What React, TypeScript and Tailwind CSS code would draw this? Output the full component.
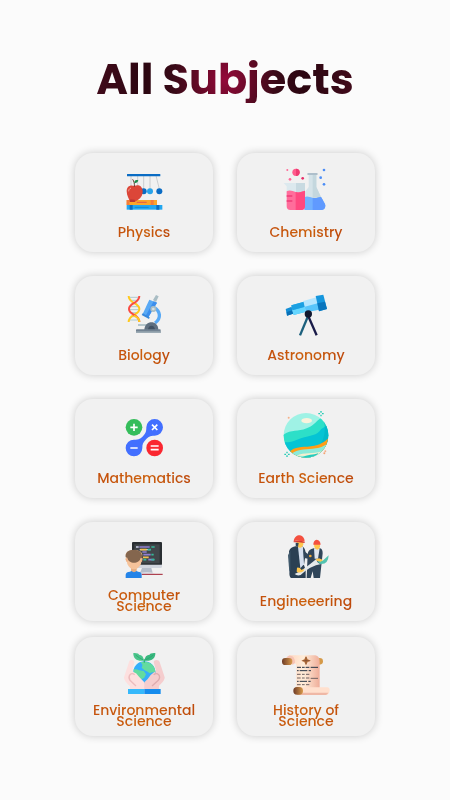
import type { ReactNode } from "react";

interface Subject {
  name: string;
  href: string;
  icon: ReactNode;
}

function Icon({ children }: { children: ReactNode }) {
  return (
    <svg viewBox="163 60 144 144" className="size-12" aria-hidden="true">
      {children}
    </svg>
  );
}

function PhysicsIcon() {
  return (
    <Icon>
      <path
        d="M196 92V122M216 92V128M234 92V132M253 92V132M271 92L281 132"
        stroke="#b8bcc0"
        strokeWidth="2"
        fill="none"
      />
      <rect x="184" y="87" width="100" height="7" rx="1" fill="#0a6cc4" />
      <circle cx="234" cy="139" r="9" fill="#0a6cc4" />
      <circle cx="253" cy="139" r="9" fill="#28a3ea" />
      <circle cx="281" cy="139" r="9" fill="#0a6cc4" />
      <rect x="183" y="165" width="91" height="15" fill="#fba629" />
      <path d="M183 165h8v15h-8zM255 165h9v15h-9z" fill="#f47b3c" />
      <path d="M213 172h30" stroke="#e2574c" strokeWidth="3" />
      <rect x="183" y="180" width="107" height="14" fill="#22a7f0" />
      <path d="M192 180h9v14h-9zM272 180h9v14h-9z" fill="#0a6cc4" />
      <path d="M207 187h42" stroke="#1287d4" strokeWidth="3" />
      <path
        d="M206 123C194 118 183 124 183 139C183 153 191 163 193 170H208C217 166 232 157 231 138C230 122 217 118 206 123Z"
        fill="#dc4638"
      />
      <path d="M194 163L192 171H208L207 164Z" fill="#b93532" />
      <path d="M189 139C189 134 191 131 196 129" stroke="#f4a69b" strokeWidth="3" fill="none" />
      <path d="M206 125C207 116 205 109 201 103" stroke="#65352c" strokeWidth="3" fill="none" />
      <path d="M206 114C206 106 210 103 218 106C216 113 212 115 206 114Z" fill="#198b48" />
    </Icon>
  );
}

function ChemistryIcon() {
  return (
    <Icon>
      <circle cx="205" cy="82" r="11" fill="#ff5b8c" />
      <path d="M205 71A11 11 0 0 1 205 93Z" fill="#ef3b72" />
      <circle cx="179" cy="75" r="3" fill="#ff6b99" />
      <circle cx="187" cy="103" r="4" fill="#ff6b99" />
      <circle cx="225" cy="100" r="4" fill="#e82e69" />
      <circle cx="289" cy="75" r="4" fill="#4b8df6" />
      <circle cx="279" cy="98" r="4" fill="#4b8df6" />
      <circle cx="289" cy="118" r="4" fill="#4b8df6" />
      <path d="M243 89H266V126L281 158H230V143L243 126Z" fill="#d5e3e9" />
      <path d="M255 89H266V126L281 158H255Z" fill="#c4d7de" />
      <rect x="239" y="84" width="31" height="6" rx="2" fill="#aebfcb" />
      <path
        d="M230 157C239 152 246 157 254 158C263 162 272 157 280 156C289 172 293 177 293 182C293 190 288 195 280 195H230Z"
        fill="#72b1ff"
      />
      <path
        d="M255 158C263 161 272 157 280 156C289 172 293 177 293 182C293 190 288 195 280 195H255Z"
        fill="#609aff"
      />
      <path d="M168 114H232V145H177V124Z" fill="#dce9ee" />
      <path d="M205 114H232V145H205Z" fill="#c8dae1" />
      <path
        d="M177 139C186 134 195 138 204 141C215 145 224 138 232 137V184Q232 195 221 195H188Q177 195 177 184Z"
        fill="#ff6d9b"
      />
      <path d="M204 141C215 145 224 138 232 137V184Q232 195 221 195H204Z" fill="#ff4880" />
      <path d="M177 153H194M177 168H194" stroke="#f03b78" strokeWidth="5" />
    </Icon>
  );
}

function BiologyIcon() {
  return (
    <Icon>
      <path
        d="M193 88H218M194 97H216M198 107H213M193 116H217M192 125H219M196 134H215M198 146H213M192 156H218"
        stroke="#afcbd1"
        strokeWidth="3"
      />
      <path
        d="M189 84C189 108 221 103 221 123C221 142 189 138 189 162"
        stroke="#ffc91f"
        strokeWidth="6"
        fill="none"
      />
      <path
        d="M221 84C221 108 190 103 190 123C190 142 221 138 221 162"
        stroke="#f94c43"
        strokeWidth="6"
        fill="none"
      />
      <path d="M205 143C217 148 221 154 221 162" stroke="#ffc91f" strokeWidth="6" fill="none" />
      <path d="M265 118C284 129 288 151 268 165" stroke="#58a9f5" strokeWidth="10" fill="none" />
      <path d="M262 96L271 81L279 85L271 102Z" fill="#a9bdc4" />
      <path d="M251 95L274 104L248 148L231 138Z" fill="#58a9f5" />
      <path d="M264 100L274 104L248 148L240 143Z" fill="#3b8eed" />
      <path d="M231 136L252 148L250 153L228 141Z" fill="#3688dc" />
      <circle cx="263" cy="123" r="9" fill="#a9bdc4" />
      <circle cx="263" cy="123" r="4" fill="#d5e1e5" />
      <path d="M217 171H244" stroke="#a9bdc4" strokeWidth="5" />
      <path d="M236 186C236 156 278 154 278 186Z" fill="#5f6f80" />
      <path d="M247 186C247 169 268 169 268 186Z" fill="#415163" />
      <rect x="211" y="184" width="74" height="11" rx="2" fill="#718292" />
      <rect x="211" y="190" width="74" height="5" fill="#9baab4" />
    </Icon>
  );
}

function AstronomyIcon() {
  return (
    <Icon>
      <path d="M240 147L217 202" stroke="#1c607d" strokeWidth="7" />
      <path d="M243 147L267 202" stroke="#191b48" strokeWidth="7" />
      <path d="M174 123L192 116L196 137L178 143Z" fill="#148fd6" />
      <path d="M177 132L194 127L196 137L178 143Z" fill="#0870b7" />
      <path d="M191 112L229 101L235 131L198 141Z" fill="#36b9f1" />
      <path d="M194 127L232 116L235 131L198 141Z" fill="#65d6ff" />
      <path d="M191 112L229 101L232 116L194 127Z" fill="#1ba0e2" />
      <path d="M227 99L266 88L274 125L235 133Z" fill="#b4e6ff" />
      <path d="M231 116L270 106L274 125L235 133Z" fill="#58c5fb" />
      <path d="M264 84L287 80L298 123L274 130Z" fill="#1596dd" />
      <path d="M269 106L292 101L298 123L274 130Z" fill="#0975bd" />
      <circle cx="242" cy="138" r="11" fill="#11182f" />
    </Icon>
  );
}

function MathematicsIcon() {
  return (
    <Icon>
      <path
        d="M242 109A25 25 0 1 1 267 134C252 134 248 138 240 146C232 154 230 160 230 171A25 25 0 1 1 205 146C220 146 226 142 233 134C240 127 242 122 242 109Z"
        fill="#426fff"
      />
      <circle cx="205" cy="109" r="25" fill="#35bd5b" />
      <circle cx="267" cy="171" r="25" fill="#fa2730" />
      <path
        d="M194 109H216M205 98V120M194 171H216M259 101L275 117M275 101L259 117M255 165H279M255 176H279"
        stroke="#fff"
        strokeWidth="5"
      />
    </Icon>
  );
}

function EarthScienceIcon() {
  return (
    <Icon>
      <defs>
        <clipPath id="planet">
          <circle cx="235" cy="133" r="67" />
        </clipPath>
      </defs>
      <g clipPath="url(#planet)">
        <rect x="165" y="64" width="140" height="140" fill="#9ff2e5" />
        <path
          d="M165 133C193 113 209 124 237 112C258 105 263 93 278 82L305 88V204H165Z"
          fill="#2ddfc8"
        />
        <path d="M165 151C188 159 202 148 220 142C249 132 267 135 281 114L305 99V204H165Z" fill="#05c4d4" />
        <path d="M274 67C300 94 296 137 271 174L311 168V76Z" fill="#00aebd" opacity=".5" />
        <path d="M184 184C203 165 220 170 250 166C280 162 290 151 305 140V204H184Z" fill="#ff9d17" />
        <path d="M188 191C216 169 239 178 264 172C284 169 290 162 305 156V204H188Z" fill="#8bead9" />
        <path d="M207 194C230 183 255 190 283 181L264 196Z" fill="#f5efcf" />
        <path d="M220 201C240 189 257 193 272 186L260 203Z" fill="#24cbbf" />
      </g>
      <ellipse cx="237" cy="89" rx="16" ry="8" fill="#faf2dc" />
      <path
        d="M280 60V65M280 71V76M272 68H277M283 68H288M178 182V187M178 193V198M170 190H175M181 190H186"
        stroke="#24cbb5"
        strokeWidth="4"
      />
      <circle cx="183" cy="80" r="3" fill="#f4b18a" />
      <circle cx="293" cy="181" r="3" fill="#f4b18a" />
      <circle cx="290" cy="187" r="3" fill="#f4a375" />
    </Icon>
  );
}

function ComputerScienceIcon() {
  return (
    <Icon>
      <rect x="199" y="84" width="90" height="70" rx="3" fill="#292e32" />
      <rect x="206" y="91" width="76" height="57" fill="#41464a" />
      <path d="M199 152H289V158Q289 162 284 162H199Z" fill="#d1d5de" />
      <path d="M229 162H257L261 176H223Z" fill="#b6bdca" />
      <path d="M218 180Q244 170 269 180Z" fill="#dfe3e9" />
      <path d="M228 181H291" stroke="#a01f30" strokeWidth="3" />
      <path d="M211 99H219M254 107H222" stroke="#ccd0ea" strokeWidth="4" />
      <path d="M221 99H252M230 114H243M233 122H255M248 137H265" stroke="#9080d2" strokeWidth="5" />
      <path d="M224 107H243M232 130H249" stroke="#f3bf50" strokeWidth="5" />
      <path d="M257 99H267M246 107H256M257 122H264M233 137H242M257 137H267" stroke="#35b799" strokeWidth="5" />
      <path d="M196 155H213V178H196Z" fill="#e6ae82" />
      <path d="M180 192V182Q181 173 193 173L197 171Q205 178 213 171L217 173Q228 173 228 182V192Z" fill="#2584e8" />
      <path d="M180 122C181 103 229 103 230 122L226 150Q218 166 205 166Q192 166 185 150Z" fill="#f6c39a" />
      <path
        d="M180 130C178 116 187 107 205 107C224 107 232 118 229 136L225 131C222 151 188 151 185 131Z"
        fill="#84664e"
      />
      <path d="M181 133L185 143M229 133L226 143" stroke="#f1b387" strokeWidth="5" />
    </Icon>
  );
}

function EngineeringIcon() {
  return (
    <Icon>
      <path d="M240 119Q243 106 258 103H277Q285 105 285 118L277 192H258L255 172L249 192H237Z" fill="#30465a" />
      <path d="M259 103H276L271 134H261Z" fill="#dfe6ed" />
      <path d="M259 89H277V99Q269 115 260 99Z" fill="#ffc64d" />
      <path d="M257 92Q257 79 267 77Q278 78 279 92Z" fill="#f4503f" />
      <path
        d="M184 112Q187 100 203 97H223Q233 101 234 119L229 153L234 168V192H190Q183 188 186 169Z"
        fill="#2b4053"
      />
      <path d="M181 124L188 110V167L185 175Z" fill="#40596c" />
      <path d="M211 99L226 98L229 151L218 163Z" fill="#d5dfee" />
      <path d="M206 80H227V91Q223 106 210 99Z" fill="#ffc64d" />
      <path d="M204 86V95L211 99L213 87Z" fill="#30465a" />
      <path d="M198 82C200 68 209 63 217 64C226 66 231 73 231 83C218 80 208 80 198 82Z" fill="#f4503f" />
      <path d="M198 82C209 79 221 79 231 84V87C217 84 207 84 198 85Z" fill="#d63c35" />
      <path d="M227 109L241 121L255 127L251 136L229 132Z" fill="#30465a" />
      <path d="M201 180Q224 170 267 134Q267 148 281 150Q248 155 219 183Q209 187 201 180Z" fill="#e4e9eb" />
      <path d="M267 134L285 140L303 124Q302 150 281 150Q272 150 267 134Z" fill="#52c3af" />
      <path d="M208 161Q216 159 222 168L230 165L228 171Q216 179 207 173Z" fill="#ffc64d" />
      <path d="M264 136L274 133L286 138L279 143L267 140Z" fill="#ffc64d" />
      <circle cx="248" cy="126" r="4" fill="#f1ac37" />
    </Icon>
  );
}

function EnvironmentalIcon() {
  return (
    <Icon>
      <path
        d="M190 99C192 91 205 91 206 100L200 124L230 151Q236 160 236 181H193V172C184 163 174 153 175 145Z"
        fill="#fde0df"
      />
      <path
        d="M282 99C280 91 265 90 264 100L271 124L241 151Q236 160 236 181H279V172C288 163 298 153 297 145Z"
        fill="#f5cdce"
      />
      <circle cx="236" cy="130" r="33" fill="#35aefb" />
      <path
        d="M224 100Q239 96 252 102C264 108 269 119 269 130Q258 128 252 133L246 128L237 124L228 116Q234 107 224 100Z"
        fill="#63db9f"
      />
      <path d="M204 121Q213 119 220 124L234 126L241 136L236 146L228 151L213 145Q203 134 204 121Z" fill="#63db9f" />
      <path d="M193 171L202 128Q213 131 220 143Q228 151 236 160V181H193Z" fill="#fde0df" />
      <path d="M236 160Q247 151 255 138L267 128L280 166L279 181H236Z" fill="#f5cdce" />
      <path d="M211 171L193 154Q187 145 193 137Q199 131 207 137" stroke="#edbcbd" strokeWidth="4" fill="none" />
      <path d="M259 171L278 154Q285 145 279 137Q272 131 264 137" stroke="#dfabae" strokeWidth="4" fill="none" />
      <path d="M236 101V91" stroke="#2eb57c" strokeWidth="4" />
      <path d="M235 95C215 98 202 89 203 72Q219 71 220 77Q233 77 235 95Z" fill="#4ac58b" />
      <path d="M236 95C256 98 270 89 269 72Q253 71 252 77Q238 77 236 95Z" fill="#38b77e" />
      <path d="M210 78Q220 87 233 93M263 78Q252 87 239 93" stroke="#2a9e6c" strokeWidth="2" fill="none" />
      <rect x="187" y="180" width="49" height="15" fill="#36b9fb" />
      <rect x="236" y="180" width="49" height="15" fill="#168ced" />
    </Icon>
  );
}

function HistoryIcon() {
  return (
    <Icon>
      <defs>
        <linearGradient id="paper" x1="0" x2="1">
          <stop offset="0" stopColor="#ffd4bd" />
          <stop offset=".5" stopColor="#ffedd9" />
          <stop offset="1" stopColor="#efad99" />
        </linearGradient>
        <linearGradient id="wood" x1="0" x2="1">
          <stop offset="0" stopColor="#6d3b27" />
          <stop offset="1" stopColor="#d99b4b" />
        </linearGradient>
      </defs>
      <ellipse cx="276" cy="97" rx="10" ry="10" fill="#d59a49" />
      <path d="M184 79H263Q276 82 276 98V179H206V107Q204 100 196 106L180 86Z" fill="url(#paper)" />
      <path d="M181 81Q201 75 202 101L195 108Q188 90 173 89Z" fill="#f7c4b5" />
      <rect x="163" y="87" width="31" height="21" rx="10" fill="url(#wood)" />
      <path d="M209 175H296Q306 173 306 184Q305 198 294 198H209Z" fill="#ffe0ce" />
      <path d="M209 191H302Q298 198 294 198H209Z" fill="#efb8a6" />
      <rect x="197" y="174" width="29" height="23" rx="11" fill="url(#wood)" />
      <path d="M235 81L240 91L250 95L240 99L235 109L230 99L221 95L230 91Z" fill="#bd7840" />
      <path d="M235 84V106M225 95H246" stroke="#75442c" strokeWidth="2" />
      <path
        d="M208 115H220M223 115H231M234 115H245M249 115H271M208 125H213M216 125H239M243 125H250M208 157H213M216 157H238M242 157H249"
        stroke="#263444"
        strokeWidth="3"
      />
      <path
        d="M208 136H219M223 136H231M235 136H245M208 147H219M223 147H231M235 147H245M249 148H271M208 167H219M223 167H231M235 167H245"
        stroke="#6f6262"
        strokeWidth="3"
      />
    </Icon>
  );
}

const subjects: Subject[] = [
  { name: "Physics", href: "#physics", icon: <PhysicsIcon /> },
  { name: "Chemistry", href: "#chemistry", icon: <ChemistryIcon /> },
  { name: "Biology", href: "#biology", icon: <BiologyIcon /> },
  { name: "Astronomy", href: "#astronomy", icon: <AstronomyIcon /> },
  { name: "Mathematics", href: "#mathematics", icon: <MathematicsIcon /> },
  { name: "Earth Science", href: "#earth-science", icon: <EarthScienceIcon /> },
  { name: "Computer Science", href: "#computer-science", icon: <ComputerScienceIcon /> },
  { name: "Engineeering", href: "#engineering", icon: <EngineeringIcon /> },
];

const moreSubjects: Subject[] = [
  { name: "Environmental Science", href: "#environmental-science", icon: <EnvironmentalIcon /> },
  { name: "History of Science", href: "#history-of-science", icon: <HistoryIcon /> },
];

function SubjectGrid({ items }: { items: Subject[] }) {
  return (
    <div className="grid grid-cols-2 gap-6">
      {items.map((subject) => (
        <a
          key={subject.name}
          href={subject.href}
          className="flex min-h-[99px] flex-col items-center rounded-[18px] bg-[#f1f1f1] px-3 pt-3 shadow-[0_0_8px_rgba(0,0,0,0.2)]"
        >
          {subject.icon}
          <span className="flex min-h-[38px] items-center bg-linear-to-r from-[#c4500c] via-[#cb5f0c] to-[#bd480b] bg-clip-text text-center text-sm leading-[11px] font-medium text-transparent">
            {subject.name}
          </span>
        </a>
      ))}
    </div>
  );
}

export default function App() {
  return (
    <main className="min-h-screen bg-[#fbfbfb] px-6 pt-[55px] pb-16 font-[Poppins,Inter,sans-serif]">
      <h1 className="text-center text-[43px] leading-[48px] font-bold">
        <span className="inline-block bg-[radial-gradient(circle_at_50%_50%,#94093a_0%,#6b0a29_18%,#380a17_40%,#2b0611_62%,#420b1b_100%)] bg-clip-text text-transparent">
          All Subjects
        </span>
      </h1>
      <div className="mx-auto mt-[50px] flex max-w-[300px] flex-col gap-4">
        <SubjectGrid items={subjects} />
        <SubjectGrid items={moreSubjects} />
      </div>
    </main>
  );
}
